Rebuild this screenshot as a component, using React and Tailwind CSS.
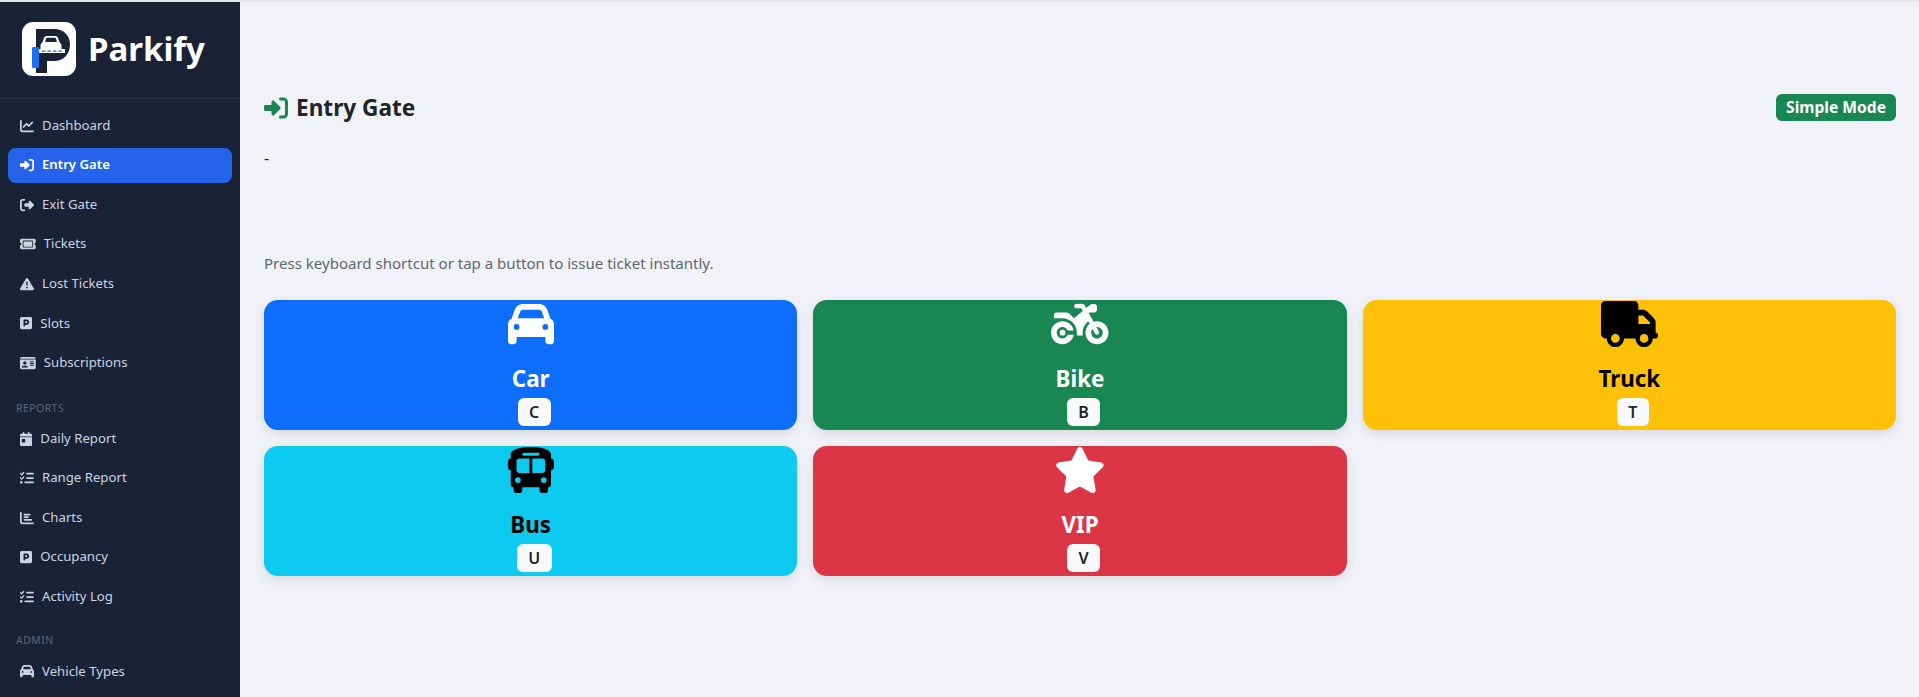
import {
  FaBus,
  FaCalendarDay,
  FaCar,
  FaChartBar,
  FaChartLine,
  FaIdCard,
  FaListCheck,
  FaMotorcycle,
  FaRightFromBracket,
  FaRightToBracket,
  FaSquareParking,
  FaStar,
  FaTicket,
  FaTriangleExclamation,
  FaTruck,
} from 'react-icons/fa6'

const mainNav = [
  { label: 'Dashboard', icon: FaChartLine, width: 'w-[14px]' },
  { label: 'Entry Gate', icon: FaRightToBracket, width: 'w-[14px]', active: true },
  { label: 'Exit Gate', icon: FaRightFromBracket, width: 'w-[14px]' },
  { label: 'Tickets', icon: FaTicket, width: 'w-[15.75px]' },
  { label: 'Lost Tickets', icon: FaTriangleExclamation, width: 'w-[14px]' },
  { label: 'Slots', icon: FaSquareParking, width: 'w-[12.25px]' },
  { label: 'Subscriptions', icon: FaIdCard, width: 'w-[15.75px]' },
]

const reportNav = [
  { label: 'Daily Report', icon: FaCalendarDay, width: 'w-[12.25px]' },
  { label: 'Range Report', icon: FaListCheck, width: 'w-[14px]' },
  { label: 'Charts', icon: FaChartBar, width: 'w-[14px]' },
  { label: 'Occupancy', icon: FaSquareParking, width: 'w-[12.25px]' },
  { label: 'Activity Log', icon: FaListCheck, width: 'w-[14px]' },
]

const adminNav = [{ label: 'Vehicle Types', icon: FaCar, width: 'w-[14px]' }]

const vehicles = [
  { label: 'Car', key: 'C', icon: FaCar, width: 'w-[46px]', color: 'bg-[#0d6efd] text-white' },
  { label: 'Bike', key: 'B', icon: FaMotorcycle, width: 'w-[57.5px]', color: 'bg-[#198754] text-white' },
  { label: 'Truck', key: 'T', icon: FaTruck, width: 'w-[57.5px]', color: 'bg-[#ffc107] text-black' },
  { label: 'Bus', key: 'U', icon: FaBus, width: 'w-[51.75px]', color: 'bg-[#0dcaf0] text-black' },
  { label: 'VIP', key: 'V', icon: FaStar, width: 'w-[51.75px]', color: 'bg-[#dc3545] text-white' },
]

function Logo() {
  return (
    <div className="w-[54px] h-[54px] shrink-0 bg-white rounded-[11px]">
      <svg viewBox="0 0 54 54" className="w-full h-full">
        <path d="M14 7h18c10 0 16 6.500 16 15.500S42 39 32 39h-7v12H14z" fill="#1a2236" />
        <path d="M20 21l2-5c.5-1.500 1.500-2 3-2h8c1.500 0 2.500.5 3 2l2 5c1 .5 1.500 1.500 1.500 2.500V27H18.500v-3.500c0-1 .5-2 1.500-2.500z" fill="#fff" />
        <path d="M23 20l1.200-3.500c.2-.5.5-.7 1-.7h7.600c.5 0 .8.2 1 .7L35 20z" fill="#1a2236" />
        <path d="M17 27h26v4H17z" fill="#fff" />
        <path d="M20 28.500h3.500v1.300H20zM25.500 28.500H29v1.300h-3.500zM31 28.500h3.500v1.300H31zM36.500 28.500H40v1.300h-3.500z" fill="#2563eb" />
        <rect x="10" y="25" width="7" height="21" rx="1" fill="#1d6ff2" />
      </svg>
    </div>
  )
}

function NavItem({ item }) {
  const Icon = item.icon
  return (
    <a
      className={`flex items-center gap-2 h-[35px] mb-[4.6px] px-3 rounded-lg text-[13.2px] ${
        item.active ? 'bg-[#2563eb] text-white font-semibold' : 'text-[#cbd5e1]'
      }`}
    >
      <Icon className={`h-[14px] shrink-0 ${item.width}`} />
      <span>{item.label}</span>
    </a>
  )
}

function SectionLabel({ children, className }) {
  return <div className={`px-4 mb-[5.5px] text-[10.4px] leading-[16px] tracking-[0.5px] uppercase text-[#5d6779] ${className}`}>{children}</div>
}

function VehicleCard({ vehicle }) {
  const Icon = vehicle.icon
  return (
    <button className={`flex flex-col items-center h-[130px] rounded-[14px] shadow-[0_4px_12px_rgba(0,0,0,0.1)] ${vehicle.color}`}>
      <Icon className={`h-[46px] mt-[1px] shrink-0 ${vehicle.width}`} />
      <span className="mt-[15px] text-[22.4px] leading-[34px] font-bold">{vehicle.label}</span>
      <span className="mt-[2px] ml-[7px] px-[11.5px] h-[28px] flex items-center rounded-md bg-[#f8f9fa] text-[#212529] text-[16px] font-semibold">{vehicle.key}</span>
    </button>
  )
}

export default function App() {
  return (
    <div className="h-screen overflow-hidden flex flex-col bg-[#f0f2f7] font-['Noto_Sans',sans-serif]">
      <div className="h-[2px] shrink-0 bg-[#e2e4e9]" />
      <div className="flex flex-1 min-h-0">
        <aside className="w-[240px] shrink-0 bg-[#1a2236] overflow-hidden">
          <div className="flex items-center gap-3 h-[97px] pl-[22px] pb-[2px] border-b border-[#2d3648]">
            <Logo />
            <span className="text-[33px] font-bold text-white">Parkify</span>
          </div>
          <nav className="px-2 pt-[9px]">
            {mainNav.map((item) => (
              <NavItem key={item.label} item={item} />
            ))}
            <div className="-mx-2">
              <SectionLabel className="mt-[19px]">Reports</SectionLabel>
            </div>
            {reportNav.map((item) => (
              <NavItem key={item.label} item={item} />
            ))}
            <div className="-mx-2">
              <SectionLabel className="mt-[18px]">Admin</SectionLabel>
            </div>
            {adminNav.map((item) => (
              <NavItem key={item.label} item={item} />
            ))}
          </nav>
        </aside>

        <main className="flex-1 min-w-0 pl-6 pr-[23px] pt-[92px]">
          <div className="flex items-center justify-between h-[27px]">
            <h1 className="flex items-center gap-2 text-[22.6px] font-bold text-[#212529]">
              <FaRightToBracket className="h-[24px] w-[24px] text-[#198754]" />
              Entry Gate
            </h1>
            <span className="flex items-center h-[27px] px-[10px] rounded-md bg-[#198754] text-white text-[15.6px] font-bold">Simple Mode</span>
          </div>
          <p className="mt-[25px] text-[16px] leading-[24px] text-[#212529]">-</p>
          <p className="mt-[82px] text-[15.04px] leading-[23px] text-[#5f6773]">Press keyboard shortcut or tap a button to issue ticket instantly.</p>
          <div className="grid grid-cols-3 gap-4 mt-[25px]">
            {vehicles.map((vehicle) => (
              <VehicleCard key={vehicle.label} vehicle={vehicle} />
            ))}
          </div>
        </main>
      </div>
    </div>
  )
}
